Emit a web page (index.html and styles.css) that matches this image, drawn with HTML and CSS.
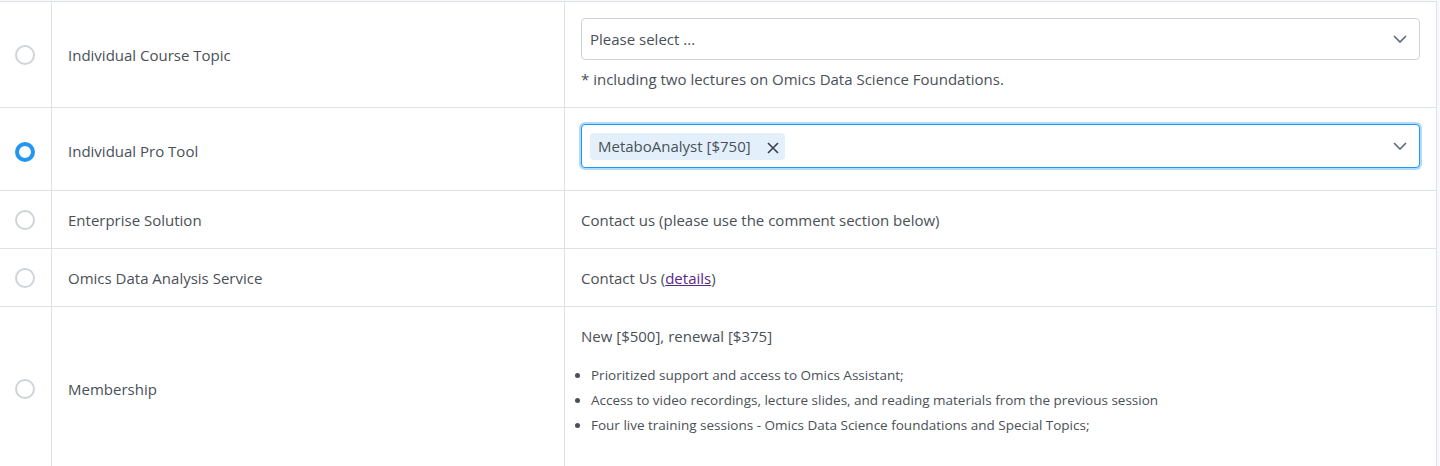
FILE: index.html
```html
<!DOCTYPE html>
<html>
<head>
    <title>Registration Options</title>
    <link rel="stylesheet" href="styles.css">
</head>
<body>
    <!-- Registration option table -->
    <table class="option-table">
        <tr class="row-topic">
            <td class="radio-cell"><span class="radio"></span></td>
            <td class="label-cell">Individual Course Topic</td>
            <td class="detail-cell">
                <div class="select-box">
                    <span class="placeholder">Please select ...</span>
                    <svg class="chevron" width="14" height="8" viewBox="0 0 14 8"><path d="M1 1l6 6 6-6" fill="none" stroke="#5b6678" stroke-width="1.6"/></svg>
                </div>
                <div class="note">* including two lectures on Omics Data Science Foundations.</div>
            </td>
        </tr>
        <tr class="row-tool">
            <td class="radio-cell"><span class="radio checked"></span></td>
            <td class="label-cell">Individual Pro Tool</td>
            <td class="detail-cell">
                <div class="select-box focused">
                    <span class="tag">MetaboAnalyst [$750]
                        <svg class="tag-close" width="12" height="12" viewBox="0 0 12 12"><path d="M1 1l10 10M11 1L1 11" stroke="#3d4450" stroke-width="1.7"/></svg>
                    </span>
                    <svg class="chevron" width="14" height="8" viewBox="0 0 14 8"><path d="M1 1l6 6 6-6" fill="none" stroke="#5b6678" stroke-width="1.6"/></svg>
                </div>
            </td>
        </tr>
        <tr class="row-short">
            <td class="radio-cell"><span class="radio"></span></td>
            <td class="label-cell">Enterprise Solution</td>
            <td class="detail-cell">Contact us (please use the comment section below)</td>
        </tr>
        <tr class="row-short">
            <td class="radio-cell"><span class="radio"></span></td>
            <td class="label-cell">Omics Data Analysis Service</td>
            <td class="detail-cell">Contact Us (<a href="#" class="visited">details</a>)</td>
        </tr>
        <tr class="row-member">
            <td class="radio-cell"><span class="radio"></span></td>
            <td class="label-cell">Membership</td>
            <td class="detail-cell">
                <div class="price">New [$500], renewal [$375]</div>
                <ul class="perks">
                    <li>Prioritized support and access to Omics Assistant;</li>
                    <li>Access to video recordings, lecture slides, and reading materials from the previous session</li>
                    <li>Four live training sessions - Omics Data Science foundations and Special Topics;</li>
                </ul>
            </td>
        </tr>
    </table>
</body>
</html>
```

FILE: styles.css
```css
/* Page base */
body {
    margin: 0;
    font-family: 'Open Sans', 'Noto Sans', sans-serif;
    font-size: 15px;
    color: #495057;
    background-color: #f7f9fc;
}

/* Table with light grey rules */
.option-table {
    width: 1437px;
    border-collapse: collapse;
    background-color: #fff;
    margin-top: 1px;
}
.option-table td {
    border: 1px solid #dee2e6;
    vertical-align: middle;
    padding: 0 16px;
}
.option-table tr td:first-child {
    border-left: none;
}

.radio-cell {
    width: 18px;
    text-align: center;
}
.label-cell {
    width: 480px;
}

/* Radio buttons */
.radio {
    display: inline-block;
    width: 16px;
    height: 16px;
    border: 2px solid #ced4da;
    border-radius: 50%;
    vertical-align: middle;
    margin-left: -1px;
}
.radio.checked {
    width: 12px;
    height: 12px;
    border: 4px solid #2196f3;
}

/* Row heights */
.row-topic td {
    height: 74px;
}
.row-topic .detail-cell {
    padding-top: 15px;
    padding-bottom: 16px;
}
.row-tool td {
    height: 78px;
    padding-top: 4px;
}
.row-tool .detail-cell {
    vertical-align: top;
    padding-top: 16px;
    height: 66px;
}
.row-short td {
    height: 57px;
}
.row-member td {
    height: 163px;
}
.row-member .detail-cell {
    vertical-align: top;
    padding-top: 15px;
    height: 148px;
}

/* Fake select input */
.select-box {
    display: flex;
    align-items: center;
    justify-content: space-between;
    height: 40px;
    padding: 0 12px 0 8px;
    border: 1px solid #ced4da;
    border-radius: 4px;
    background-color: #fff;
}
.select-box.focused {
    height: 42px;
    border-color: #2196f3;
    box-shadow: 0 0 0 2px rgba(33, 150, 243, 0.35);
}
.chevron {
    flex-shrink: 0;
}
.note {
    margin-top: 8px;
    line-height: 22px;
}

/* Selected value chip */
.tag {
    display: inline-flex;
    align-items: center;
    height: 27px;
    padding: 0 6px 0 8px;
    border-radius: 4px;
    background-color: #e3f0fb;
    color: #495057;
}
.tag-close {
    margin-left: 16px;
    margin-top: 3px;
}

a.visited {
    color: #5a2886;
}

/* Membership details */
.price {
    line-height: 28px;
}
.perks {
    margin: 13px 0 0 0;
    padding-left: 10px;
    font-size: 13.5px;
    line-height: 25px;
}
```
